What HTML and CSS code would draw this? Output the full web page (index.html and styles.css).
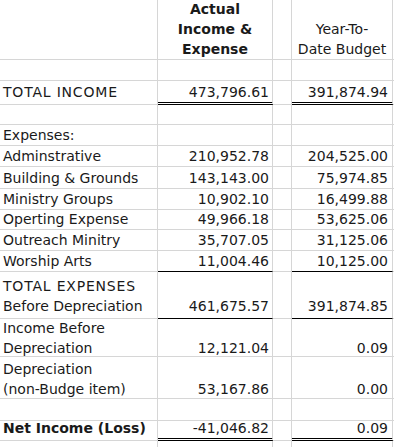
FILE: index.html
```html
<!DOCTYPE html>
<html lang="en">
<head>
<meta charset="utf-8">
<title>Income &amp; Expense</title>
<link rel="stylesheet" href="styles.css">
</head>
<body>
<div class="sheet">
  <div class="row">
    <div class="cell"></div>
    <div class="cell hd"><span class="v">Actual<br>Income &amp;<br>Expense</span></div>
    <div class="cell"></div>
    <div class="cell hd2"><span class="v">Year-To-<br>Date Budget</span></div>
    <div class="cell edge"></div>
  </div>
  <div class="row">
    <div class="cell"></div><div class="cell"></div><div class="cell"></div><div class="cell"></div><div class="cell edge"></div>
  </div>
  <div class="row dbl">
    <div class="cell lbl caps"><span class="v">TOTAL INCOME</span></div>
    <div class="cell num u2"><span class="v">473,796.61</span></div>
    <div class="cell"></div>
    <div class="cell num d u2"><span class="v">391,874.94</span></div>
    <div class="cell edge"></div>
  </div>
  <div class="row">
    <div class="cell"></div><div class="cell"></div><div class="cell"></div><div class="cell"></div><div class="cell edge"></div>
  </div>
  <div class="row">
    <div class="cell lbl"><span class="v">Expenses:</span></div>
    <div class="cell"></div><div class="cell"></div><div class="cell"></div><div class="cell edge"></div>
  </div>
  <div class="row">
    <div class="cell lbl"><span class="v">Adminstrative</span></div>
    <div class="cell num"><span class="v">210,952.78</span></div>
    <div class="cell"></div>
    <div class="cell num d"><span class="v">204,525.00</span></div>
    <div class="cell edge"></div>
  </div>
  <div class="row">
    <div class="cell lbl"><span class="v">Building &amp; Grounds</span></div>
    <div class="cell num"><span class="v">143,143.00</span></div>
    <div class="cell"></div>
    <div class="cell num d"><span class="v">75,974.85</span></div>
    <div class="cell edge"></div>
  </div>
  <div class="row">
    <div class="cell lbl"><span class="v">Ministry Groups</span></div>
    <div class="cell num"><span class="v">10,902.10</span></div>
    <div class="cell"></div>
    <div class="cell num d"><span class="v">16,499.88</span></div>
    <div class="cell edge"></div>
  </div>
  <div class="row">
    <div class="cell lbl"><span class="v">Operting Expense</span></div>
    <div class="cell num"><span class="v">49,966.18</span></div>
    <div class="cell"></div>
    <div class="cell num d"><span class="v">53,625.06</span></div>
    <div class="cell edge"></div>
  </div>
  <div class="row">
    <div class="cell lbl"><span class="v">Outreach Minitry</span></div>
    <div class="cell num"><span class="v">35,707.05</span></div>
    <div class="cell"></div>
    <div class="cell num d"><span class="v">31,125.06</span></div>
    <div class="cell edge"></div>
  </div>
  <div class="row">
    <div class="cell lbl"><span class="v">Worship Arts</span></div>
    <div class="cell num u1"><span class="v">11,004.46</span></div>
    <div class="cell"></div>
    <div class="cell num d u1"><span class="v">10,125.00</span></div>
    <div class="cell edge"></div>
  </div>
  <div class="row lift2">
    <div class="cell lbl"><span class="v"><span class="caps">TOTAL EXPENSES</span><br>Before Depreciation</span></div>
    <div class="cell num u1"><span class="v">461,675.57</span></div>
    <div class="cell"></div>
    <div class="cell num d u1"><span class="v">391,874.85</span></div>
    <div class="cell edge"></div>
  </div>
  <div class="row sink2">
    <div class="cell lbl"><span class="v">Income Before<br>Depreciation</span></div>
    <div class="cell num"><span class="v">12,121.04</span></div>
    <div class="cell"></div>
    <div class="cell num d"><span class="v">0.09</span></div>
    <div class="cell edge"></div>
  </div>
  <div class="row sink1">
    <div class="cell lbl"><span class="v">Depreciation<br>(non-Budge item)</span></div>
    <div class="cell num"><span class="v">53,167.86</span></div>
    <div class="cell"></div>
    <div class="cell num d"><span class="v">0.00</span></div>
    <div class="cell edge"></div>
  </div>
  <div class="row">
    <div class="cell"></div><div class="cell"></div><div class="cell"></div><div class="cell"></div><div class="cell edge"></div>
  </div>
  <div class="row dbl">
    <div class="cell lbl strong"><span class="v">Net Income (Loss)</span></div>
    <div class="cell num u2"><span class="v">-41,046.82</span></div>
    <div class="cell"></div>
    <div class="cell num d u2"><span class="v">0.09</span></div>
    <div class="cell edge"></div>
  </div>
  <div class="row">
    <div class="cell"></div><div class="cell"></div><div class="cell"></div><div class="cell"></div><div class="cell edge"></div>
  </div>
</div>
</body>
</html>
```

FILE: styles.css
```css
html, body {
  margin: 0;
  padding: 0;
  background: #ffffff;
  overflow: hidden;
}

body {
  font-family: "DejaVu Sans", "Liberation Sans", sans-serif;
  font-size: 14px;
  color: #1a1a1a;
}

.sheet {
  display: grid;
  grid-template-columns: 158px 115px 19px 101px 20px;
  grid-template-rows: 60px 21px 24px 20px 21px 21px 22px 21px 20px 21px 21px 47px 38px 42px 22px 20px 21px;
  width: 413px;
}

.row {
  display: contents;
}

.cell {
  box-sizing: border-box;
  border-right: 1px solid #d6d6d6;
  border-bottom: 1px solid #d6d6d6;
  display: flex;
  flex-direction: column;
  justify-content: flex-end;
  line-height: 20px;
  white-space: nowrap;
  min-width: 0;
}

.edge {
  border-right: none;
}

.lbl {
  padding-left: 3px;
}

.caps {
  letter-spacing: 0.8px;
}

.strong {
  font-weight: bold;
}

.num {
  text-align: right;
  padding-right: 3px;
}

.num.d {
  padding-right: 4px;
}

.hd {
  text-align: center;
  font-weight: bold;
}

.hd2 {
  text-align: center;
}

.u1 {
  border-bottom-color: #000000;
}

.u2 {
  border-bottom: 3px double #000000;
}

.dbl .cell {
  padding-bottom: 2px;
}

.dbl .cell.u2 {
  padding-bottom: 0;
}

.lift2 .cell {
  padding-bottom: 2px;
}

.sink2 .v {
  margin-bottom: -2px;
}

.sink1 .v {
  margin-bottom: -1px;
}
```
